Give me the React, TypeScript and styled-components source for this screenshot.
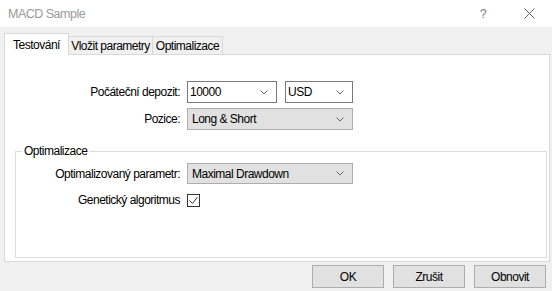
import * as React from "react";
import styled, { createGlobalStyle } from "styled-components";

const GlobalStyle = createGlobalStyle`
  html, body {
    margin: 0;
    padding: 0;
  }

  body {
    background: #f0f0f0;
    color: #000;
    font-family: "Liberation Sans", Arial, sans-serif;
    font-size: 12px;
    letter-spacing: -0.5px;
  }
`;

const Window = styled.div`
  width: 552px;
  height: 291px;
  display: flex;
  flex-direction: column;
  background: #f0f0f0;
  overflow: hidden;
`;

const TitleBar = styled.div`
  height: 27px;
  display: flex;
  align-items: center;
  background: #fff;
  padding-left: 8px;
`;

const Title = styled.div`
  flex: 1;
  color: #999;
  font-size: 12.5px;
`;

const CaptionButton = styled.div`
  width: 46px;
  height: 27px;
  display: flex;
  align-items: center;
  justify-content: center;
  color: #777;
`;

const Body = styled.div`
  display: flex;
  flex-direction: column;
  padding: 6px 2px 0 4px;
`;

const TabStrip = styled.div`
  position: relative;
  z-index: 1;
  height: 22px;
  margin-bottom: -1px;
  display: flex;
  align-items: flex-end;
`;

const Tab = styled.div<{ $active?: boolean; $width: number }>`
  box-sizing: border-box;
  width: ${(p) => p.$width}px;
  height: ${(p) => (p.$active ? 22 : 19)}px;
  padding-top: ${(p) => (p.$active ? 4 : 2)}px;
  line-height: 14px;
  text-align: center;
  white-space: nowrap;
  background: ${(p) => (p.$active ? "#fff" : "#f0f0f0")};
  border: 1px solid #d9d9d9;
  border-left: ${(p) => (p.$active ? "1px solid #d9d9d9" : "none")};
  border-bottom: ${(p) => (p.$active ? "none" : "1px solid #d9d9d9")};
`;

const Panel = styled.div`
  box-sizing: border-box;
  height: 208px;
  display: flex;
  flex-direction: column;
  background: #fff;
  border: 1px solid #d9d9d9;
`;

const FormGrid = styled.div<{ $labelWidth: number; $rowGap: number; $top: number }>`
  display: grid;
  grid-template-columns: ${(p) => p.$labelWidth}px auto;
  column-gap: 7px;
  row-gap: ${(p) => p.$rowGap}px;
  align-items: center;
  margin-top: ${(p) => p.$top}px;
`;

const Label = styled.div`
  text-align: right;
  white-space: nowrap;
  line-height: 14px;
`;

const ControlRow = styled.div`
  display: flex;
  gap: 8px;
`;

const Combo = styled.div<{ $width: number; $height?: number; $readonly?: boolean }>`
  box-sizing: border-box;
  width: ${(p) => p.$width}px;
  height: ${(p) => p.$height || 22}px;
  display: flex;
  align-items: center;
  justify-content: space-between;
  padding: 0 8px 0 ${(p) => (p.$readonly ? 4 : 2)}px;
  background: ${(p) => (p.$readonly ? "#e1e1e1" : "#fff")};
  border: 1px solid ${(p) => (p.$readonly ? "#adadad" : "#7a7a7a")};
  white-space: nowrap;
`;

const GroupBox = styled.fieldset`
  flex: 1;
  min-width: 0;
  margin: 14px 2px 3px 10px;
  padding: 0 6px;
  border: 1px solid #dcdcdc;
`;

const Legend = styled.legend`
  padding: 0 2px;
  line-height: 14px;
`;

const CheckBox = styled.span`
  box-sizing: border-box;
  width: 13px;
  height: 13px;
  display: flex;
  align-items: center;
  justify-content: center;
  background: #fff;
  border: 1px solid #333;
`;

const Footer = styled.div`
  display: flex;
  justify-content: flex-end;
  gap: 9px;
  padding: 3px 6px 0 0;
`;

const Button = styled.button`
  box-sizing: border-box;
  width: 72px;
  height: 23px;
  padding: 0;
  font: inherit;
  letter-spacing: inherit;
  color: #000;
  background: #e1e1e1;
  border: 1px solid #adadad;
`;

const Chevron = () => (
  <svg width="8" height="5" viewBox="0 0 8 5">
    <path d="M0.5 0.5 L4 4 L7.5 0.5" stroke="#666" strokeWidth="1" fill="none" />
  </svg>
);

const DropDown = (props: { value: string; width: number; height?: number; readonly?: boolean }) => (
  <Combo $width={props.width} $height={props.height} $readonly={props.readonly}>
    <span>{props.value}</span>
    <Chevron />
  </Combo>
);

export default function App() {
  return (
    <Window>
      <GlobalStyle />
      <TitleBar>
        <Title>MACD Sample</Title>
        <CaptionButton>?</CaptionButton>
        <CaptionButton>
          <svg width="11" height="11" viewBox="0 0 11 11">
            <path d="M0.5 0.5 L10.5 10.5 M10.5 0.5 L0.5 10.5" stroke="#666" strokeWidth="1" />
          </svg>
        </CaptionButton>
      </TitleBar>

      <Body>
        <TabStrip>
          <Tab $active $width={65}>Testování</Tab>
          <Tab $width={84}>Vložit parametry</Tab>
          <Tab $width={70}>Optimalizace</Tab>
        </TabStrip>

        <Panel>
          <FormGrid $labelWidth={175} $rowGap={5} $top={26}>
            <Label>Počáteční depozit:</Label>
            <ControlRow>
              <DropDown value="10000" width={90} />
              <DropDown value="USD" width={68} />
            </ControlRow>
            <Label>Pozice:</Label>
            <DropDown value="Long & Short" width={166} readonly />
          </FormGrid>

          <GroupBox>
            <Legend>Optimalizace</Legend>
            <FormGrid $labelWidth={158} $rowGap={9} $top={5}>
              <Label>Optimalizovaný parametr:</Label>
              <DropDown value="Maximal Drawdown" width={166} height={21} readonly />
              <Label>Genetický algoritmus</Label>
              <CheckBox>
                <svg width="11" height="11" viewBox="0 0 11 11">
                  <path d="M1.5 5.5 L4.5 8.5 L9.5 2" stroke="#333" strokeWidth="1" fill="none" />
                </svg>
              </CheckBox>
            </FormGrid>
          </GroupBox>
        </Panel>
      </Body>

      <Footer>
        <Button>OK</Button>
        <Button>Zrušit</Button>
        <Button>Obnovit</Button>
      </Footer>
    </Window>
  );
}
